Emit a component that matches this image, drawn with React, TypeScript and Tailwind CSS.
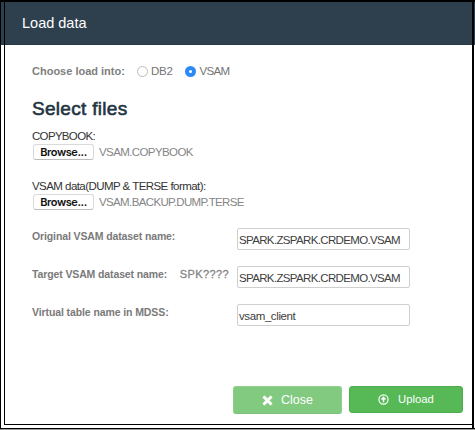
import React from 'react';
import { FaTimes } from 'react-icons/fa';

function Radio({ label, checked, tracking }: { label: string; checked?: boolean; tracking: string }) {
  return (
    <label className="flex items-center">
      {checked ? (
        <span className="flex h-[11px] w-[11px] items-center justify-center rounded-full bg-[#2b8af5]">
          <span className="h-[3px] w-[3px] rounded-full bg-white" />
        </span>
      ) : (
        <span className="h-[11px] w-[11px] rounded-full border border-[#bdbdbd] bg-white" />
      )}
      <span className={`ml-[3px] text-[11.5px] leading-4 text-[#747474] ${tracking}`}>{label}</span>
    </label>
  );
}

function FilePicker({ label, file, labelTracking, fileTracking }: { label: string; file: string; labelTracking: string; fileTracking: string }) {
  return (
    <div className="h-[50px]">
      <div className={`h-4 text-[11.5px] leading-4 text-[#333] ${labelTracking}`}>{label}</div>
      <div className="flex h-4 items-center">
        <button className="ml-px h-4 w-[61px] rounded-[3px] border border-[#dadada] border-b-[#bcbcbc] bg-white font-[Inter,sans-serif] text-[11px] leading-[14px] font-semibold tracking-[-0.4px] text-[#111]">
          Browse...
        </button>
        <span className={`ml-[5px] text-[11.5px] leading-4 text-[#858585] ${fileTracking}`}>{file}</span>
      </div>
    </div>
  );
}

function Field({ label, hint, value, tracking, valueTracking }: { label: string; hint?: string; value: string; tracking: string; valueTracking: string }) {
  return (
    <div className="flex h-[38px] items-start">
      <div className="flex w-[205px] items-start">
        <span className={`text-[10.5px] leading-4 font-bold text-[#7a7a7a] ${tracking}`}>{label}</span>
        {hint && (
          <span className="ml-auto pr-[8px] text-[11px] leading-4 tracking-[0.4px] text-[#858585] [-webkit-text-stroke:0.3px_#858585]">{hint}</span>
        )}
      </div>
      <div className={`h-[22px] w-[173px] rounded-[2px] border border-[#cfcfcf] bg-white pl-px text-[11.5px] leading-[22px] text-[#404040] ${valueTracking}`}>
        {value}
      </div>
    </div>
  );
}

export default function App() {
  return (
    <div className="h-[430px] w-[475px] overflow-hidden bg-[#9a9a9a] font-['Liberation_Sans',Arial,sans-serif] whitespace-nowrap">
      <div className="flex h-[429px] border-t-2 border-b border-l border-black bg-white">
        <div className="w-[3px] shrink-0">
          <div className="h-[43px] bg-[#2e404d]" />
        </div>
        <main className="h-[423px] min-w-0 flex-1 border-b border-l border-black">
          <header className="h-[43px] border-b border-[#263943] bg-[#2e404d] pl-[17px] text-[14.5px] leading-[42px] text-white">
            Load data
          </header>
          <div className="pl-[27px]">
            <div className="flex h-[46px] items-start pt-[18px]">
              <span className="w-[105px] text-[11px] leading-4 font-bold text-[#808080]">Choose load into:</span>
              <Radio label="DB2" tracking="tracking-[-0.3px]" />
              <div className="w-[13px]" />
              <Radio label="VSAM" checked tracking="tracking-[-0.65px]" />
            </div>
            <h1 className="h-[37px] pt-[6px] text-[19px] leading-6 tracking-[0.3px] text-[#22343f] [-webkit-text-stroke:0.6px_#22343f]">
              Select files
            </h1>
            <FilePicker label="COPYBOOK:" file="VSAM.COPYBOOK" labelTracking="tracking-[-0.68px]" fileTracking="tracking-[-0.6px]" />
            <FilePicker label="VSAM data(DUMP & TERSE format):" file="VSAM.BACKUP.DUMP.TERSE" labelTracking="tracking-[-0.55px]" fileTracking="tracking-[-0.63px]" />
            <Field label="Original VSAM dataset name:" value="SPARK.ZSPARK.CRDEMO.VSAM" tracking="tracking-[-0.12px]" valueTracking="tracking-[-0.65px]" />
            <Field label="Target VSAM dataset name:" hint="SPK????" value="SPARK.ZSPARK.CRDEMO.VSAM" tracking="tracking-[-0.12px]" valueTracking="tracking-[-0.65px]" />
            <Field label="Virtual table name in MDSS:" value="vsam_client" tracking="tracking-[-0.1px]" valueTracking="tracking-[-0.4px]" />
          </div>
          <div className="mt-[44px] flex items-start justify-end gap-[7px] pr-[9px] text-white">
            <button className="flex h-7 w-[109px] items-center justify-center gap-[8px] rounded-[3px] border border-[#8fd08e] border-b-[#7cc47b] bg-[#81ca80] text-[12.5px]">
              <FaTimes className="h-[13px] w-[11px]" stroke="white" strokeWidth="30" />
              Close
            </button>
            <button className="flex h-[27px] w-[114px] items-center justify-center gap-[9px] rounded-[3px] border border-[#4cae4c] bg-[#56b955] text-[11.3px]">
              <svg viewBox="0 0 12 12" className="h-[11px] w-[11px]" fill="none" stroke="currentColor">
                <circle cx="6" cy="6" r="5" strokeWidth="1.3" />
                <path d="M6 9V4M3.8 6L6 3.7L8.2 6" strokeWidth="1.6" />
              </svg>
              Upload
            </button>
          </div>
        </main>
        <div className="w-[2px] shrink-0 bg-black" />
        <div className="w-px shrink-0">
          <div className="h-[43px] bg-[#2e404d]" />
        </div>
      </div>
    </div>
  );
}
